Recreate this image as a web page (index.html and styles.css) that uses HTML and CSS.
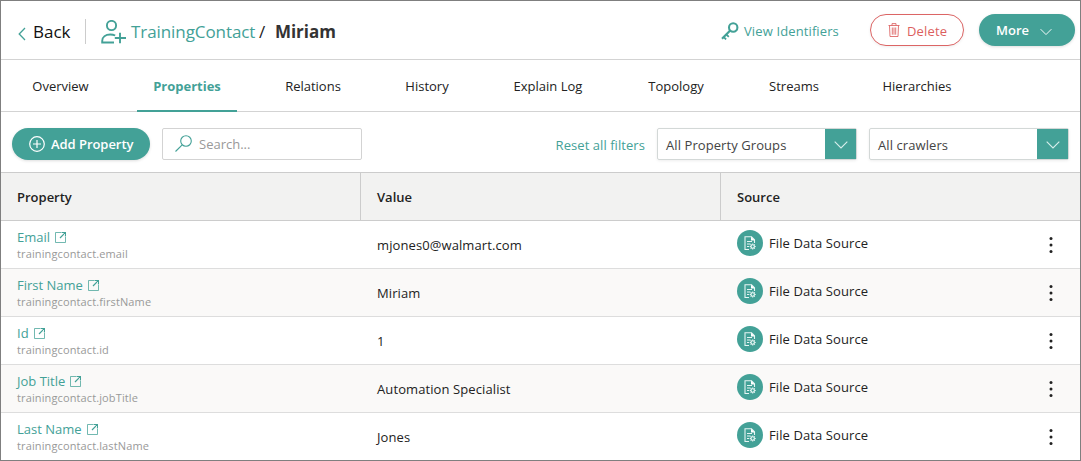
FILE: index.html
```html
<!DOCTYPE html>
<html lang="en">
<head>
<meta charset="utf-8">
<title>TrainingContact / Miriam</title>
<link rel="stylesheet" href="styles.css">
</head>
<body>
<svg class="defs" aria-hidden="true">
  <symbol id="open" viewBox="0 0 11 11"><path d="M6 .5H.5v10h10V5" fill="none" stroke="currentColor" stroke-opacity=".75"/><path d="M6.500.500h4v4M10.300.700L5 6" fill="none" stroke="currentColor" stroke-width="1.200"/></symbol>
  <symbol id="file" viewBox="0 0 26 26"><circle cx="13" cy="13" r="13" fill="#43a197"/><g fill="none" stroke="#e6f5f3" stroke-width="1.100"><path d="M12 19.500H8V6.700h6.500l3 3V13M10 11.500h5M10 14h3.500M10 16.500h2"/><circle cx="15.700" cy="16.500" r="1.700"/><path d="M15.700 13.500v1.300M15.700 18.200v1.300M12.700 16.500h1.300M17.400 16.500h1.300M13.600 14.400l.9.900M16.900 17.700l.9.900M17.800 14.400l-.9.900M14.500 17.700l-.9.900"/></g><path d="M14 6.500l4 4h-4z" fill="#fff"/></symbol>
  <symbol id="down" viewBox="0 0 14 8"><path d="M.700.700L7 7 13.300.700" fill="none" stroke="currentColor" stroke-width="1.100"/></symbol>
  <symbol id="dots" viewBox="0 0 4 18"><circle cx="2" cy="2.500" r="1.500"/><circle cx="2" cy="9" r="1.500"/><circle cx="2" cy="15.500" r="1.500"/></symbol>
</svg>
<main class="frame">
  <header class="header">
    <svg class="back-icon" viewBox="0 0 8 14"><path d="M7 1L1.200 7 7 13" fill="none" stroke="currentColor" stroke-width="1.300"/></svg>
    <span class="back">Back</span>
    <span class="divider"></span>
    <svg class="user-icon" viewBox="0 0 26 24"><g fill="none" stroke="currentColor" stroke-width="1.900"><circle cx="10.500" cy="5.500" r="4.600"/><path d="M13 22.500H1.200v-1.500c0-4 3.500-6.500 8-6.500 2 0 3.600.3 5 1M19 12.700v10.600M13.800 18H25"/></g></svg>
    <span class="type">TrainingContact</span>
    <span class="slash">/</span>
    <h1 class="name">Miriam</h1>
    <span class="actions">
      <svg class="key-icon" viewBox="0 0 18 18"><g fill="none" stroke="currentColor"><circle cx="12.200" cy="5.500" r="4.200" stroke-width="2.100"/><path d="M9.200 8.500L1 16.700" stroke-width="2.200"/><path d="M5.200 12.300l2.600 2.600M2.500 14.800l2.600 2.600" stroke-width="1.800"/></g></svg>
      <a class="identifiers">View Identifiers</a>
      <button class="delete"><svg class="trash" viewBox="0 0 12 14"><path d="M.500 2.500h11M4 2.300V.6h4v1.700M1.500 2.500l.5 11h8l.5-11M4.300 4.500v7.200M6 4.500v7.200M7.700 4.500v7.200" fill="none" stroke="currentColor" stroke-width=".85"/></svg><span>Delete</span></button>
      <button class="more"><span>More</span><svg class="more-icon"><use href="#down"/></svg></button>
    </span>
  </header>
  <nav class="tabs">
    <a class="tab">Overview</a><a class="tab active">Properties</a><a class="tab">Relations</a><a class="tab">History</a><a class="tab">Explain Log</a><a class="tab">Topology</a><a class="tab">Streams</a><a class="tab">Hierarchies</a>
  </nav>
  <section class="toolbar">
    <button class="add"><svg class="plus" viewBox="0 0 16 16"><g fill="none" stroke="currentColor" stroke-width="1.200"><circle cx="8" cy="8" r="7.300"/><path d="M8 4v8M4 8h8"/></g></svg><span>Add Property</span></button>
    <div class="search"><svg class="lens" viewBox="0 0 17 17"><g fill="none" stroke="currentColor" stroke-width="1.100"><circle cx="11" cy="6" r="5.300"/><path d="M7.200 9.800L.5 16.500"/></g></svg><span>Search...</span></div>
    <a class="reset">Reset all filters</a>
    <div class="select"><span>All Property Groups</span><i class="caret"><svg><use href="#down"/></svg></i></div>
    <div class="select"><span>All crawlers</span><i class="caret"><svg><use href="#down"/></svg></i></div>
  </section>
  <section class="table">
    <div class="row head"><div class="cell">Property</div><div class="cell">Value</div><div class="cell">Source</div></div>
    <div class="row"><div class="prop"><a>Email<svg><use href="#open"/></svg></a><small>trainingcontact.email</small></div><div class="value">mjones0@walmart.com</div><div class="source"><svg class="file"><use href="#file"/></svg><span>File Data Source</span><svg class="dots"><use href="#dots"/></svg></div></div>
    <div class="row alt"><div class="prop"><a>First Name<svg><use href="#open"/></svg></a><small>trainingcontact.firstName</small></div><div class="value">Miriam</div><div class="source"><svg class="file"><use href="#file"/></svg><span>File Data Source</span><svg class="dots"><use href="#dots"/></svg></div></div>
    <div class="row"><div class="prop"><a>Id<svg><use href="#open"/></svg></a><small>trainingcontact.id</small></div><div class="value">1</div><div class="source"><svg class="file"><use href="#file"/></svg><span>File Data Source</span><svg class="dots"><use href="#dots"/></svg></div></div>
    <div class="row alt"><div class="prop"><a>Job Title<svg><use href="#open"/></svg></a><small>trainingcontact.jobTitle</small></div><div class="value">Automation Specialist</div><div class="source"><svg class="file"><use href="#file"/></svg><span>File Data Source</span><svg class="dots"><use href="#dots"/></svg></div></div>
    <div class="row"><div class="prop"><a>Last Name<svg><use href="#open"/></svg></a><small>trainingcontact.lastName</small></div><div class="value">Jones</div><div class="source"><svg class="file"><use href="#file"/></svg><span>File Data Source</span><svg class="dots"><use href="#dots"/></svg></div></div>
  </section>
</main>
</body>
</html>
```
FILE: styles.css
```css
* { box-sizing: border-box; }
body {
  margin: 0;
  font: 13px/20px "Open Sans", "Noto Sans", sans-serif;
  color: #222;
  background: #fff;
  white-space: nowrap;
}
svg { display: block; flex: none; }
.defs { display: none; }
button { font: inherit; border: 0; margin: 0; }
.frame { width: 1081px; height: 461px; border: 1px solid #7f7f7f; overflow: hidden; }

.header { height: 59px; display: flex; align-items: center; border-bottom: 1px solid #d3d3d3; padding-left: 17px; }
.back-icon { width: 8px; height: 14px; color: #43a197; margin-top: 7px; }
.back { width: 43px; margin-left: 7px; font-size: 17px; color: #111; margin-top: 3px; }
.divider { width: 1px; height: 25px; background: #ccc; margin: 2px 15px 0 9px; }
.user-icon { width: 26px; height: 24px; color: #43a197; margin-top: 3px; }
.type { width: 125px; margin-left: 4px; font-size: 17px; letter-spacing: -.08px; color: #43a197; margin-top: 3px; }
.slash { width: 16px; margin-left: 3px; font-size: 17px; margin-top: 3px; }
.name { margin: 3px 0 0; font-size: 17px; font-weight: 700; letter-spacing: -.05px; color: #333; }
.actions { margin-left: auto; display: flex; align-items: center; padding-right: 5px; color: #43a197; }
.key-icon { width: 18px; height: 18px; margin-top: 2px; }
.identifiers { width: 96px; margin: 2px 30px 0 5px; letter-spacing: .12px; }
.delete { display: flex; align-items: center; width: 94px; height: 32px; border: 1px solid #dc6565; border-radius: 16px; background: #fff; color: #dc5f5f; padding: 0 0 0 17px; gap: 7px; box-shadow: 0 1px 3px #0001; }
.delete span { margin-top: 2px; letter-spacing: .15px; }
.trash { width: 12px; height: 14px; }
.more { display: flex; align-items: center; width: 96px; height: 32px; margin-left: 15px; border-radius: 16px; padding: 0 0 0 17px; gap: 11px; background: #43a197; color: #fff; box-shadow: 0 1px 3px #0002; font-weight: 600; }
.more-icon { width: 12px; height: 8px; margin-top: 4px; }

.tabs { height: 52px; border-bottom: 1px solid #d3d3d3; display: grid; grid-template-columns: 89px 100px 88px 76px 102px 90px 82px 100px; column-gap: 32px; padding-left: 15px; }
.tab { height: 52px; text-align: center; line-height: 53px; }
.active { font-weight: 700; color: #43a197; border-bottom: 2px solid #43a197; }

.toolbar { height: 60px; padding: 0 11px; display: flex; align-items: center; }
.add { width: 138px; height: 32px; border-radius: 16px; background: #43a197; color: #fff; display: flex; align-items: center; gap: 6px; padding: 0 0 0 17px; font-weight: 600; letter-spacing: -.05px; box-shadow: 0 1px 3px #0002; margin-top: 3px; }
.plus { width: 16px; height: 16px; }
.search { width: 200px; height: 32px; border: 1px solid #d3d3d3; border-radius: 2px; margin: 3px 0 0 12px; padding-left: 12px; display: flex; align-items: center; gap: 7px; color: #999; }
.lens { width: 17px; height: 17px; color: #43a197; }
.reset { color: #43a197; margin: 5px 12px 0 auto; letter-spacing: .06px; }
.select { width: 200px; height: 32px; border: 1px solid #d3d8d7; border-radius: 2px; padding-left: 8px; display: flex; align-items: center; justify-content: space-between; color: #444; margin-top: 3px; box-shadow: 0 1px 3px #0001; letter-spacing: .08px; }
.select span { margin-top: 2px; }
.select + .select { margin-left: 12px; }
.caret { width: 31px; height: 30px; background: #43a197; color: #d8efec; display: flex; align-items: center; justify-content: center; }
.caret svg { width: 14px; height: 8px; margin-top: 3px; }

.row { display: grid; grid-template-columns: 360px 360px 1fr; height: 48px; border-bottom: 1px solid #ddd; }
.head { height: 49px; border-top: 1px solid #ccc; border-bottom-color: #ccc; background: #f2f2f1; font-weight: 600; line-height: 48px; }
.cell { border-right: 1px solid #ccc; padding-left: 16px; }
.cell:last-child { border-right: 0; }
.alt { background: #faf9f8; }
.prop { padding: 6px 0 0 16px; }
.prop a { display: flex; align-items: center; gap: 5px; height: 20px; color: #43a197; }
.prop svg { width: 11px; height: 11px; }
.prop small { display: block; font-size: 11px; line-height: 14px; letter-spacing: .12px; color: #999; }
.value { padding-left: 16px; line-height: 49px; letter-spacing: .1px; }
.source { display: flex; align-items: center; height: 45px; padding: 0 27px 0 16px; gap: 6px; letter-spacing: .1px; }
.source span { margin-top: -1px; }
.file { width: 26px; height: 26px; margin-top: -1px; }
.dots { width: 4px; height: 18px; margin: 3px 0 0 auto; fill: #222; }
```
